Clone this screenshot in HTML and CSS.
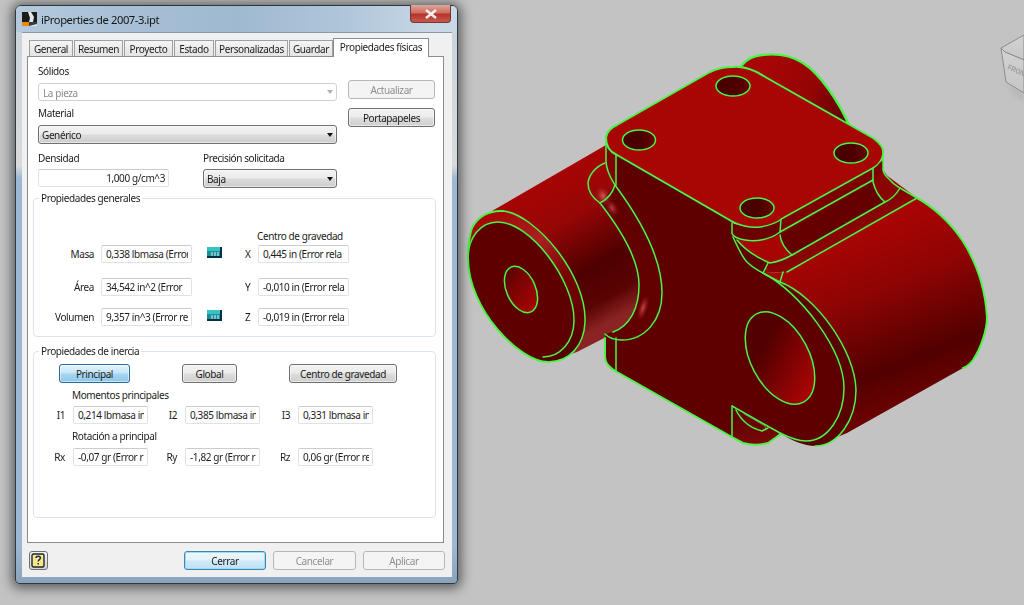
FILE: index.html
```html
<!DOCTYPE html>
<html lang="es">
<head>
<meta charset="utf-8">
<title>iProperties de 2007-3.ipt</title>
<link rel="stylesheet" href="styles.css">
</head>
<body>
<div class="desktop">
  <svg class="model" width="1024" height="605" viewBox="0 0 1024 605" xmlns="http://www.w3.org/2000/svg">
    <defs>
      <linearGradient id="gLeftCyl" gradientUnits="userSpaceOnUse" x1="545" y1="178" x2="622" y2="315">
        <stop offset="0" stop-color="#a80404"/><stop offset=".3" stop-color="#960606"/><stop offset=".64" stop-color="#4f0000"/><stop offset=".86" stop-color="#5a0303"/><stop offset="1" stop-color="#8a2424"/>
      </linearGradient>
      <linearGradient id="gRightCyl" gradientUnits="userSpaceOnUse" x1="850" y1="235" x2="915" y2="400">
        <stop offset="0" stop-color="#a80404"/><stop offset=".35" stop-color="#8e0404"/><stop offset=".78" stop-color="#520000"/><stop offset="1" stop-color="#6a0202"/>
      </linearGradient>
      <linearGradient id="gBack" gradientUnits="userSpaceOnUse" x1="760" y1="70" x2="850" y2="135">
        <stop offset="0" stop-color="#a80606"/><stop offset=".5" stop-color="#930404"/><stop offset="1" stop-color="#4f0000"/>
      </linearGradient>
      <linearGradient id="gFlange" gradientUnits="userSpaceOnUse" x1="500" y1="205" x2="590" y2="350">
        <stop offset="0" stop-color="#a80404"/><stop offset=".3" stop-color="#a82020"/><stop offset=".55" stop-color="#7a0202"/><stop offset="1" stop-color="#4f0000"/>
      </linearGradient>
      <linearGradient id="gHoleL" gradientUnits="userSpaceOnUse" x1="510" y1="270" x2="532" y2="310">
        <stop offset="0" stop-color="#5a0202"/><stop offset=".35" stop-color="#7a0303"/><stop offset="1" stop-color="#a90404"/>
      </linearGradient>
      <linearGradient id="gHoleR" gradientUnits="userSpaceOnUse" x1="757" y1="325" x2="805" y2="395">
        <stop offset="0" stop-color="#520000"/><stop offset=".25" stop-color="#530000"/><stop offset="1" stop-color="#ad0505"/>
      </linearGradient>
      <linearGradient id="gPlateHole" gradientUnits="objectBoundingBox" x1="0" y1="0" x2="1" y2="0">
        <stop offset="0" stop-color="#480000"/><stop offset=".6" stop-color="#4d0000"/><stop offset="1" stop-color="#6a0000"/>
      </linearGradient>
      <linearGradient id="gStep" gradientUnits="userSpaceOnUse" x1="830" y1="205" x2="845" y2="232">
        <stop offset="0" stop-color="#600000"/><stop offset="1" stop-color="#8a0404"/>
      </linearGradient>
      <linearGradient id="gNotch" gradientUnits="userSpaceOnUse" x1="745" y1="415" x2="750" y2="444">
        <stop offset="0" stop-color="#5e0000"/><stop offset="1" stop-color="#7a0808"/>
      </linearGradient>
      <radialGradient id="gGlow"><stop offset="0" stop-color="#d85a5a"/><stop offset=".5" stop-color="#b03030" stop-opacity=".6"/><stop offset="1" stop-color="#8a1010" stop-opacity="0"/></radialGradient>
      <linearGradient id="gCube" x1="0" y1="0" x2="0" y2="1"><stop offset="0" stop-color="#d2d2d2"/><stop offset="1" stop-color="#c6c6c6"/></linearGradient>
    </defs>

    <!-- view cube -->
    <g>
      <path class="cube-shadow" d="M1007 84 L1024 94 L1024 102 L1012 92 Z"/>
      <path class="cube" d="M1001 48 L1024 35 L1024 60 L1005 52 Z"/>
      <path class="cube" d="M1001 48 L1005 52 L1024 60 L1024 93 L1006 82 Z"/>
      <text class="cube-text" transform="translate(1007 69) rotate(24) scale(.85 1)">FRONT</text>
    </g>

    <!-- back boss -->
    <path fill="url(#gBack)" d="M740 67 C746 60 752 56 762 55 C778 53 792 56 803 63 C820 74 838 100 851 128 L800 100 Z"/>
    <path class="edge thick" d="M742 65 C746 60 752 56 762 55 C778 53 792 56 803 63 C820 74 838 100 850 127"/>

    <!-- left cylinder -->
    <path fill="url(#gLeftCyl)" d="M492 211 L606 145 L640 200 L660 300 L612 334 L577 352 L545 362 Z"/>

    <!-- right cylinder -->
    <path fill="url(#gRightCyl)" d="M763 273 L787 272 L873 165 L917 198 C932 206 950 222 962 240 C975 260 985 285 987 317 C987 330 981 348 973 360 C970 364 966 367 963 368 L847 433 L815 446 Z"/>

    <!-- step between plate and cylinder -->
    <path fill="url(#gStep)" d="M780 219 L873 167 L883 170 L890 180 L900 188 L917 198 L787 272 L763 273 L735 238 Z"/>

    <!-- front face -->
    <path class="dark" d="M606 146 L617 155 L733 222 L737 240 C743 252 752 258 763 273 C800 292 844 350 844 388 C844 416 828 441 806 441 C797 441 788 437 780 433 L768 443 C760 445 750 445 743 443 L732 437 L617 372 C610 368 605 364 605 356 L605 336 L615 332 L628 322 L637 303 L638 273 L625 240 L615 185 L606 166 Z"/>

    <!-- ring flange on right -->
    <path fill="#5a0000" d="M763 273 L780 282 C815 295 855 350 856 390 C856 420 838 446 815 446 C805 446 790 440 780 433 C788 437 797 441 806 441 C828 441 844 416 844 388 C844 350 800 292 763 273 Z"/>
    <path fill="#8a1212" opacity=".75" d="M763 273 L780 282 C800 292 812 302 822 314 C805 298 785 284 763 273 Z"/>

    <!-- fillet near plate -->
    <path fill="url(#gRightCyl)" d="M737 240 C745 250 758 258 770 263 L792 255 L780 235 L750 240 Z"/>
    <ellipse cx="760" cy="266" rx="13" ry="3" transform="rotate(28 760 266)" fill="url(#gGlow)"/>
    <path class="dark" d="M733 237 C738 248 742 257 747 262 L763 273 L768 263 C758 258 745 250 737 240 Z"/>

    <!-- left flange fillet strip -->
    <path fill="#620000" d="M615 185 C635 212 662 255 662 293 C662 320 645 340 622 340 C615 340 609 338 605 334 L613 332 C630 326 639 308 639 285 C639 258 618 226 600 203 Z"/>
    <ellipse cx="603" cy="196" rx="8" ry="11" transform="rotate(-25 603 196)" fill="url(#gGlow)"/>
    <ellipse cx="612" cy="208" rx="6" ry="10" transform="rotate(-30 612 208)" fill="url(#gGlow)" opacity=".7"/>
    <ellipse cx="643" cy="308" rx="5" ry="14" transform="rotate(18 643 308)" fill="url(#gGlow)" opacity=".8"/>

    <!-- left cylinder flange + disk -->
    <path fill="url(#gFlange)" d="M472 228 C478 216 490 210 503 211 C535 214 587 275 585 322 C584 345 570 362 548 362 C520 362 468 310 468 258 C468 247 469 237 472 228 Z"/>
    <path class="dark" d="M468 258 C468 238 480 222 498 222 C530 222 574 280 574 320 C574 342 560 357 543 357 C520 357 468 310 468 258 Z"/>
    <ellipse fill="url(#gHoleL)" cx="521" cy="289.5" rx="14.5" ry="24.5" transform="rotate(-24 521 289.5)"/>

    <!-- top plate -->
    <path class="plate" d="M606 138 C606 132 612 127 617 125 L710 72 C718 68 727 67 733 67 C742 66 755 70 767 78 L873 138 C880 143 884 149 883 154 C882 160 878 165 873 168 L783 218 C775 224 768 226 760 227 C752 228 742 226 733 222 L617 155 C610 152 606 146 606 138 Z"/>
    <ellipse class="phole" cx="639" cy="140" rx="16.5" ry="10"/>
    <ellipse class="phole" cx="733" cy="86" rx="17" ry="10"/>
    <ellipse class="phole" cx="851" cy="153" rx="17" ry="10"/>
    <ellipse class="phole" cx="757" cy="208" rx="17" ry="10"/>

    <!-- plate side pieces -->
    <path fill="#800202" d="M606 143 C608 150 612 153 616 155 L616 185 L606 166 Z"/>
    <path fill="#6a0000" d="M732 223 C742 227 760 229 770 226 L781 219 L780 232 C770 240 755 242 745 240 C738 239 732 236 732 233 Z"/>
    <path fill="#7c0000" d="M781 219 L873 168 L883 160 L883 170 L873 182 L780 235 Z"/>
    <path fill="#660000" d="M780 235 L873 182 C875 190 880 198 885 202 L792 255 C786 250 781 243 780 235 Z"/>
    <path fill="#8a0404" d="M873 182 L883 170 L890 180 L900 188 C896 195 890 200 885 202 C880 198 875 190 873 182 Z"/>

    <!-- notch -->
    <path fill="url(#gNotch)" d="M732 406 L780 433 L768 443 C760 445 750 445 743 443 L732 437 Z"/>
    <path fill="#6a0202" d="M737 411 C740 420 748 428 760 431 L768 429 Z"/>

    <!-- right hole -->
    <ellipse fill="url(#gHoleR)" cx="780" cy="358" rx="28.4" ry="49.4" transform="rotate(-28 780 358)"/>

    <!-- green edges -->
    <g class="edges">
      <!-- left flange -->
      <path class="thick" d="M472 228 C478 216 490 210 503 211 M548 362 C520 362 468 310 468 258 C468 247 469 237 472 228"/>
      <path d="M503 211 C535 214 587 275 585 322 C584 345 570 362 548 362"/>
      <path d="M468 258 C468 238 480 222 498 222 C530 222 574 280 574 320 C574 342 560 357 543 357"/>
      <ellipse cx="521" cy="289.5" rx="14.5" ry="24.5" transform="rotate(-24 521 289.5)"/>
      <!-- fillet curves -->
      <path d="M605 163 C595 167 589 175 588 183 C588 192 594 199 600 203 C618 226 639 258 639 285 C639 308 630 326 613 332"/>
      <path d="M615 185 C612 195 606 200 600 203"/>
      <path d="M615 185 C635 212 662 255 662 293 C662 320 645 340 622 340 C615 340 609 338 605 334"/>
      <path d="M606 140 L606 160 C606 172 612 180 615 185"/>
      <path d="M616 155 L616 185"/>
      <!-- block lower-left -->
      <path d="M616 338 L616 372"/>
      <path class="thick" d="M605 338 L605 356 C605 364 610 368 617 372 L732 437 L743 443 C750 445 760 445 768 443 L781 434"/>
      <!-- top plate -->
      <path class="thick" d="M733 222 L617 155 C610 152 606 146 606 138 C606 132 612 127 617 125 L710 72 C718 68 727 67 733 67 C742 66 755 70 767 78 L873 138 C880 143 884 149 883 154"/>
      <path d="M883 154 C882 160 878 165 873 168 L783 218 C775 224 768 226 760 227 C752 228 742 226 733 222"/>
      <ellipse cx="639" cy="140" rx="16.5" ry="10"/>
      <ellipse cx="733" cy="86" rx="17" ry="10"/>
      <ellipse cx="851" cy="153" rx="17" ry="10"/>
      <ellipse cx="757" cy="208" rx="17" ry="10"/>
      <!-- plate sides -->
      <path d="M732 223 L732 233 C732 236 738 239 745 240 C755 242 770 240 780 232 L781 219"/>
      <path d="M780 232 L873 180"/>
      <path d="M873 168 L873 182 C875 190 880 198 885 202"/>
      <path d="M883 154 L883 170 C884 175 888 178 890 180 C893 184 897 186 900 188"/>
      <path d="M780 235 C781 243 786 250 792 255"/>
      <path d="M792 255 L885 202 C890 200 896 195 900 188"/>
      <path d="M900 188 L917 198"/>
      <path d="M787 272 L917 198"/>
      <path d="M792 255 C785 259 777 262 770 263 C758 258 745 250 737 240"/>
      <path d="M733 237 C738 248 742 257 747 262 C752 267 757 270 763 273 C768 276 774 279 780 282"/>
      <path d="M768 263 L763 273"/>
      <path d="M783 272 L780 282"/>
      <!-- right ring -->
      <path d="M763 273 C800 292 844 350 844 388 C844 416 828 441 806 441 C797 441 788 437 780 433"/>
      <path d="M780 282 C815 295 855 350 856 390 C856 420 838 446 815 446"/>
      <ellipse cx="780" cy="358" rx="29" ry="50" transform="rotate(-28 780 358)"/>
      <!-- right silhouette -->
      <path class="thick" d="M917 198 C932 206 950 222 962 240 C975 260 985 285 987 317 C987 330 981 348 973 360 C970 364 966 367 963 368"/>
      <!-- notch -->
      <path d="M732 406 L732 437"/>
      <path d="M732 406 L780 433"/>
      <path d="M736 410 C741 420 750 428 762 431 L768 428"/>
      <path class="fine" d="M744 414 L765 426 L766 430"/>
    </g>
  </svg>

  <section class="window">
    <header class="titlebar">
      <div class="title">
        <svg class="app-icon" width="15" height="14" viewBox="0 0 15 14" xmlns="http://www.w3.org/2000/svg">
          <rect width="15" height="14" fill="#e4e8ea"/>
          <path d="M0 0 L6 0 L8 6 L7 10 L0 10 Z M9 0 L15 0 L15 10 L11 10 L12 5 Z" fill="#1b1b1b"/>
          <path d="M0 10 L7 10 L7 14 L0 14 Z" fill="#e88a10"/>
          <path d="M7 10 L15 10 L15 12 L7 14 Z" fill="#3a3a3a"/>
        </svg>
        <span>iProperties de 2007-3.ipt</span>
      </div>
      <button class="close" type="button" aria-label="Cerrar">
        <svg width="14" height="10" viewBox="0 0 14 10" xmlns="http://www.w3.org/2000/svg"><path d="M2 1 L12 9 M12 1 L2 9" stroke="#f4f0f0" stroke-width="2.4"/></svg>
      </button>
    </header>

    <div class="panel">
      <nav class="tabs">
        <span class="tab">General</span>
        <span class="tab">Resumen</span>
        <span class="tab">Proyecto</span>
        <span class="tab">Estado</span>
        <span class="tab">Personalizadas</span>
        <span class="tab">Guardar</span>
        <span class="tab tab-active">Propiedades físicas</span>
      </nav>

      <div class="pane">
        <div class="top-grid">
          <div class="label lab-solidos">Sólidos</div>
          <div class="combo combo-disabled">La pieza<i class="arrow"></i></div>
          <div class="side-buttons">
            <button class="btn btn-disabled btn-side" type="button">Actualizar</button>
            <button class="btn btn-side" type="button">Portapapeles</button>
          </div>
          <div class="label lab-material">Material</div>
          <div class="combo combo-material">Genérico<i class="arrow"></i></div>
          <div class="label lab-density">Densidad</div>
          <div class="label lab-precision">Precisión solicitada</div>
          <div class="field field-density"><span>1,000 g/cm^3</span></div>
          <div class="combo combo-precision">Baja<i class="arrow"></i></div>
        </div>

        <div class="group group-general">
          <span class="legend">Propiedades generales</span>
          <div class="gen-row gen-head"><span class="gen-cog">Centro de gravedad</span></div>
          <div class="gen-row">
            <span class="rlabel">Masa</span>
            <div class="field"><span>0,338 lbmasa (Error</span></div>
            <span class="calc-cell"><svg class="calc" width="15" height="11" viewBox="0 0 15 11" xmlns="http://www.w3.org/2000/svg"><rect width="15" height="11" fill="#06304a"/><rect x="0" y="0" width="13" height="4" fill="#35c4c4"/><rect x="0" y="4" width="13" height="5" fill="#1a8f98"/><path d="M4 6h2M7 6h2M10 6h2M4 8h2M7 8h2M10 8h2" stroke="#d8f4f4" stroke-width="1"/></svg></span>
            <span class="axis">X</span>
            <div class="field"><span>0,445 in (Error rela</span></div>
          </div>
          <div class="gen-row gen-row-area">
            <span class="rlabel">Área</span>
            <div class="field"><span>34,542 in^2 (Error</span></div>
            <span class="calc-cell"></span>
            <span class="axis">Y</span>
            <div class="field"><span>-0,010 in (Error rela</span></div>
          </div>
          <div class="gen-row gen-row-vol">
            <span class="rlabel">Volumen</span>
            <div class="field"><span>9,357 in^3 (Error re</span></div>
            <span class="calc-cell"><svg class="calc" width="15" height="11" viewBox="0 0 15 11" xmlns="http://www.w3.org/2000/svg"><rect width="15" height="11" fill="#06304a"/><rect x="0" y="0" width="13" height="4" fill="#35c4c4"/><rect x="0" y="4" width="13" height="5" fill="#1a8f98"/><path d="M4 6h2M7 6h2M10 6h2M4 8h2M7 8h2M10 8h2" stroke="#d8f4f4" stroke-width="1"/></svg></span>
            <span class="axis">Z</span>
            <div class="field"><span>-0,019 in (Error rela</span></div>
          </div>
        </div>

        <div class="group group-inertia">
          <span class="legend">Propiedades de inercia</span>
          <div class="inertia-buttons">
            <button class="btn btn-pressed btn-principal" type="button">Principal</button>
            <button class="btn btn-global" type="button">Global</button>
            <button class="btn btn-cog" type="button">Centro de gravedad</button>
          </div>
          <div class="inertia-grid">
            <span class="sub">Momentos principales</span>
            <span class="rlabel2">I1</span><div class="field"><span>0,214 lbmasa in</span></div>
            <span class="rlabel2">I2</span><div class="field"><span>0,385 lbmasa in</span></div>
            <span class="rlabel2">I3</span><div class="field"><span>0,331 lbmasa in</span></div>
            <span class="sub">Rotación a principal</span>
            <span class="rlabel2">Rx</span><div class="field"><span>-0,07 gr (Error r</span></div>
            <span class="rlabel2">Ry</span><div class="field"><span>-1,82 gr (Error r</span></div>
            <span class="rlabel2">Rz</span><div class="field"><span>0,06 gr (Error re</span></div>
          </div>
        </div>
      </div>

      <footer class="footer">
        <button class="help" type="button" aria-label="Ayuda">
          <svg width="15" height="15" viewBox="0 0 15 15" xmlns="http://www.w3.org/2000/svg"><rect x="1" y="1" width="12" height="13" rx="1.5" fill="#f4e88a" stroke="#20242c" stroke-width="1.4"/><path d="M5 5 C5 2.6 9.4 2.6 9.4 5 C9.4 6.6 7.2 6.6 7.2 8.4 M7.2 10 L7.2 11.6" fill="none" stroke="#1a2a5a" stroke-width="1.5"/></svg>
        </button>
        <div class="footer-buttons">
          <button class="btn btn-default btn-foot" type="button">Cerrar</button>
          <button class="btn btn-disabled btn-foot btn-cancel" type="button">Cancelar</button>
          <button class="btn btn-disabled btn-foot" type="button">Aplicar</button>
        </div>
      </footer>
    </div>
  </section>
</div>
</body>
</html>
```

FILE: styles.css
```css
* { box-sizing: border-box; }
html, body { margin: 0; padding: 0; }
body { background: #c3c3c3; font-family: "Noto Sans", "DejaVu Sans", sans-serif; font-size: 10px; letter-spacing: -.4px; color: #1c1c1c; }

.desktop { position: relative; width: 1024px; height: 605px; overflow: hidden; background: #c3c3c3; }

/* 3D model */
.model { position: absolute; left: 0; top: 0; filter: blur(.3px); letter-spacing: 0; }
.edges path, .edges ellipse, .edge { fill: none; stroke: #48f548; stroke-width: 1.5; stroke-linejoin: round; stroke-linecap: round; }
.edges .thick, .thick { stroke-width: 2; }
.edges .fine { stroke-width: .6; stroke: #7ad27a; }
.edge.thick { fill: none; stroke: #48f548; stroke-width: 2.4; }
.dark { fill: #5e0000; }
.plate { fill: #a80505; }
.phole { fill: url(#gPlateHole); }
.cube { fill: url(#gCube); stroke: #8c8c8c; stroke-width: 1; }
.cube-shadow { fill: #b5b5b5; filter: blur(2px); }
.cube-text { font-family: "Liberation Sans", sans-serif; font-size: 7.5px; font-weight: bold; fill: #9a9a9a; }

/* Window */
.window {
  position: absolute; left: 15px; top: 5px; width: 443px; height: 579px;
  border: 1px solid #2e3842; border-radius: 6px 6px 4px 4px;
  box-shadow: 0 1px 12px 3px rgba(0,0,0,.55);
  background: linear-gradient(180deg, #c8d3dc 0, #d6d9db 130px, #d8dadb 160px, #9db8d2 172px, #9db8d2 540px, #8aa2ba 579px);
  filter: blur(.4px);
}
.titlebar {
  display: flex; justify-content: space-between; align-items: flex-start; height: 26px;
  border-radius: 5px 5px 0 0;
  background: linear-gradient(90deg, #b4c9dc 0, #a9c1d7 20%, #9fb9d0 50%, #b0c6da 75%, #c8d8e6 95%);
}
.title { display: flex; align-items: center; gap: 4px; height: 26px; padding-left: 6px; font-size: 11.2px; letter-spacing: -.42px; color: #141414; }
.app-icon { flex: none; }
.close {
  display: flex; align-items: center; justify-content: center; width: 41px; height: 18px; margin: -1px 6px 0 0; padding: 0;
  border: 1px solid #6d3a35; border-top: 0; border-radius: 0 0 4px 4px;
  background: linear-gradient(180deg, #d9a89f 0, #cf6c5f 45%, #b5342a 55%, #c9594c 100%);
}

.panel { width: 430px; height: 545px; margin-left: 6px; padding: 5px 8px 0 5px; background: #f0f0f0; border-top: 1px solid #8c98a4; }

/* Tabs */
.tabs { display: flex; align-items: flex-end; height: 18px; padding-left: 2px; gap: 1px; position: relative; z-index: 1; }
.tab { display: flex; align-items: center; justify-content: center; height: 16px; background: linear-gradient(180deg, #f4f4f4, #e4e4e4); border: 1px solid #a0a0a0; border-bottom: 0; white-space: nowrap; }
.tab:nth-child(1) { width: 44px; }
.tab:nth-child(2) { width: 49px; }
.tab:nth-child(3) { width: 49px; }
.tab:nth-child(4) { width: 40px; }
.tab:nth-child(5) { width: 73px; }
.tab:nth-child(6) { width: 44px; margin-right: -1px; }
.tab-active { width: 96px; height: 19px; margin-bottom: -1px; padding-bottom: 2px; background: #fff; border-color: #8c8c8c; }

.pane { height: 487px; padding: 8px 7px 0 5px; background: #fff; border: 1px solid #8c8c8c; }

.top-grid {
  display: grid; margin-left: 5px; width: 397px;
  grid-template-columns: 131px 34px 134px 11px 87px;
  grid-template-rows: 18px 18px 24px 19px 25px 19px;
}
.label { white-space: nowrap; }
.lab-solidos { grid-column: 1 / 4; grid-row: 1; line-height: 12px; }
.combo-disabled { grid-column: 1 / 4; grid-row: 2; }
.lab-material { grid-column: 1 / 4; grid-row: 3; align-self: center; }
.combo-material { grid-column: 1 / 4; grid-row: 4; }
.lab-density { grid-column: 1; grid-row: 5; align-self: center; padding-top: 2px; }
.lab-precision { grid-column: 3; grid-row: 5; align-self: center; padding-top: 2px; }
.field-density { grid-column: 1; grid-row: 6; text-align: right; }
.combo-precision { grid-column: 3; grid-row: 6; }
.side-buttons { grid-column: 5; grid-row: 1 / 5; display: flex; flex-direction: column; gap: 9px; padding-top: 15px; }
.btn-side { width: 87px; padding-top: 1px; }

.combo {
  position: relative; display: flex; align-items: center; height: 19px; padding: 1px 0 0 3px;
  border: 1px solid #707070; border-radius: 3px;
  background: linear-gradient(180deg, #f3f3f3 0, #ebebeb 48%, #dcdcdc 52%, #cdcdcd 100%);
  box-shadow: inset 0 0 0 1px rgba(255,255,255,.5);
}
.combo-disabled { height: 18px; color: #8c8c8c; padding-left: 4px; border-color: #d0d0d0; background: #fff; box-shadow: none; }
.arrow { position: absolute; right: 3px; top: 50%; margin-top: -2px; border: 3.5px solid transparent; border-bottom: 0; border-top: 4px solid #111; }
.combo-disabled .arrow { border-top-color: #b0b0b0; }

.field { display: flex; align-items: center; height: 18px; padding: 0 3px 0 4px; background: #fff; border: 1px solid #dfe2e8; border-top-color: #c9ccd4; border-radius: 2px; }
.field span { display: block; width: 100%; overflow: hidden; white-space: nowrap; }

.btn { height: 19px; padding: 0; font: inherit; letter-spacing: inherit; color: #1c1c1c; border: 1px solid #707070; border-radius: 3px; background: linear-gradient(180deg, #f3f3f3 0, #ebebeb 48%, #dddddd 52%, #cfcfcf 100%); box-shadow: inset 0 0 0 1px rgba(255,255,255,.5); }
.btn-disabled { color: #8f8f8f; border-color: #b4b8bb; background: #f4f4f4; box-shadow: none; }
.btn-pressed { border-color: #2c6a94; background: linear-gradient(180deg, #e3f3fc 0, #c4e5f8 48%, #a6d6f2 52%, #8ec8ea 100%); }
.btn-default { border-color: #3c88b5; background: linear-gradient(180deg, #eef7fc 0, #e3f2fa 48%, #cfe9f7 52%, #bfe2f5 100%); box-shadow: inset 0 0 0 1px #9edcf5; }

/* Groups */
.group { position: relative; width: 403px; background: #fff; border: 1px solid #dde3ec; border-radius: 4px; }
.legend { position: absolute; left: 5px; top: -7px; padding: 0 2px; line-height: 13px; background: #fff; }
.group-general { height: 139px; margin-top: 10px; padding-top: 29px; }
.group-inertia { height: 167px; margin-top: 14px; padding-top: 12px; }

.gen-row { display: grid; grid-template-columns: 67px 91px 53px 13px 91px; align-items: center; height: 18px; }
.gen-head { height: 17px; align-items: start; }
.gen-cog { grid-column: 5; margin-left: -1px; line-height: 16px; white-space: nowrap; }
.gen-row-area { margin-top: 15px; }
.gen-row-vol { margin-top: 12px; }
.rlabel { padding-right: 7px; text-align: right; }
.calc-cell { display: flex; padding-left: 15px; margin-bottom: 4px; }

.inertia-buttons { display: flex; gap: 52px; margin-left: 25px; }
.btn-principal { width: 71px; }
.btn-global { width: 55px; }
.btn-cog { width: 108px; }

.inertia-grid { display: grid; grid-template-columns: 39px 75px 37px 75px 38px 75px; grid-template-rows: 23px 18px 24px 18px; align-items: center; }
.sub { grid-column: 2 / 7; margin-left: -1px; }
.rlabel2 { padding-right: 8px; text-align: right; }

/* Footer */
.footer { display: flex; justify-content: space-between; margin: 8px -1px 0 0; padding-left: 2px; }
.help { display: flex; align-items: center; justify-content: center; width: 19px; height: 19px; padding: 0; border: 1px solid #707070; border-radius: 3px; background: linear-gradient(180deg, #f3f3f3, #d4d4d4); }
.footer-buttons { display: flex; gap: 7px; }
.btn-foot { width: 82px; padding-top: 1px; }
.btn-cancel { width: 83px; }
```
